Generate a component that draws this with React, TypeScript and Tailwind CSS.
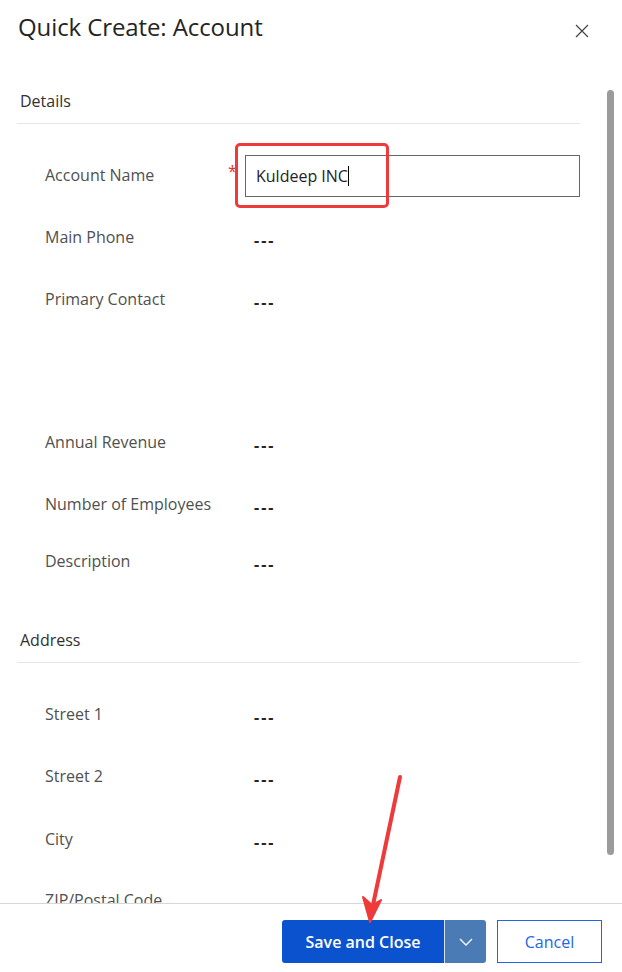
import React from 'react'

const font = { fontFamily: '"Open Sans", "Noto Sans", sans-serif' }

type Row = { label: string; h: string }

const detailRows: Row[] = [
  { label: 'Main Phone', h: 'h-[62px]' },
  { label: 'Primary Contact', h: 'h-[143px]' },
  { label: 'Annual Revenue', h: 'h-[62px]' },
  { label: 'Number of Employees', h: 'h-[57px]' },
  { label: 'Description', h: 'h-[79px]' },
]

const addressRows: Row[] = [
  { label: 'Street 1', h: 'h-[62px]' },
  { label: 'Street 2', h: 'h-[63px]' },
  { label: 'City', h: 'h-[61px]' },
  { label: 'ZIP/Postal Code', h: 'h-[62px]' },
]

const FieldRow = ({ label, h }: Row) => (
  <div className={`flex ${h}`}>
    <div className="w-[211px] shrink-0 pl-[28px] text-[16px] leading-[24px] text-[#505050] whitespace-nowrap">{label}</div>
    <div className="pl-[26px] pt-[3px] text-[16px] leading-[24px] font-bold tracking-[2px] text-[#242424]">---</div>
  </div>
)

const SectionHeader = ({ title }: { title: string }) => (
  <div className="pl-[3px] pb-[10px] border-b border-[#e6e6e6] text-[16px] leading-[24px] font-medium text-[#323130]">
    {title}
  </div>
)

export default function App() {
  return (
    <div className="relative w-[622px] h-[972px] bg-white flex flex-col overflow-hidden" style={font}>
      {/* Header */}
      <div className="h-[62px] flex items-start justify-between pl-[18px] pr-[33px] pt-[11px] shrink-0">
        <h1 className="text-[24px] leading-[32px] font-medium text-[#242424] tracking-[-0.1px]">Quick Create: Account</h1>
        <svg width="14" height="14" viewBox="0 0 14 14" className="mt-[13px]">
          <path d="M1 1 L13 13 M13 1 L1 13" stroke="#444" strokeWidth="1.2" fill="none" />
        </svg>
      </div>

      {/* Body */}
      <div className="flex-1 flex overflow-hidden">
        <div className="w-[580px] pl-[17px] shrink-0">
          <div className="pt-[27px]">
            <SectionHeader title="Details" />
          </div>

          {/* Account Name */}
          <div className="flex pt-[31px] pb-[28px]">
            <div className="w-[211px] shrink-0 pl-[28px] pt-[8px] text-[16px] leading-[24px] text-[#505050]">Account Name</div>
            <div className="w-[17px] shrink-0 pt-[4px] text-[16px] leading-[24px] text-[#e0332f]">*</div>
            <div className="relative flex-1">
              <div className="h-[42px] border border-[#666] flex items-center px-[10px] text-[16px] text-[#242424]">
                Kuldeep INC
                <span className="inline-block w-px h-[20px] bg-black" />
              </div>
              <div className="absolute -left-[10px] -top-[12px] w-[154px] h-[65px] border-[3px] border-[#ee3a3a] rounded-[5px]" />
            </div>
          </div>

          {detailRows.map((r) => (
            <FieldRow key={r.label} {...r} />
          ))}

          <SectionHeader title="Address" />
          <div className="h-[39px]" />

          {addressRows.map((r) => (
            <FieldRow key={r.label} {...r} />
          ))}
        </div>
        <div className="ml-[27px] mt-[28px] w-[7px] h-[765px] rounded-full bg-[#9b9b9b]" />
      </div>

      {/* Footer */}
      <div className="h-[69px] shrink-0 border-t border-[#d6d6d6] bg-white flex justify-end pt-[16px] pr-[20px] relative z-10">
        <div className="flex h-[43px]">
          <button className="w-[163px] h-[43px] bg-[#0b53ce] text-white text-[16px] font-semibold rounded-l-[3px] border-r border-[#d8e2f2]">
            Save and Close
          </button>
          <button className="w-[41px] h-[43px] bg-[#4a7bb4] rounded-r-[3px] flex items-center justify-center">
            <svg width="14" height="8" viewBox="0 0 14 8">
              <path d="M1 1 L7 7 L13 1" stroke="white" strokeWidth="1.3" fill="none" />
            </svg>
          </button>
        </div>
        <button className="ml-[11px] w-[105px] h-[43px] border border-[#2266e3] text-[#2266e3] text-[16px]">
          Cancel
        </button>
      </div>

      {/* Annotation arrow */}
      <svg className="absolute left-0 top-0 pointer-events-none z-20" width="622" height="972" viewBox="0 0 622 972">
        <line x1="400" y1="777" x2="373" y2="905" stroke="#ee3a3a" strokeWidth="4" strokeLinecap="round" />
        <path d="M363 897 L370 922 L381 900 L372 905 Z" fill="#ee3a3a" stroke="#ee3a3a" strokeWidth="2" strokeLinejoin="round" />
      </svg>
    </div>
  )
}
